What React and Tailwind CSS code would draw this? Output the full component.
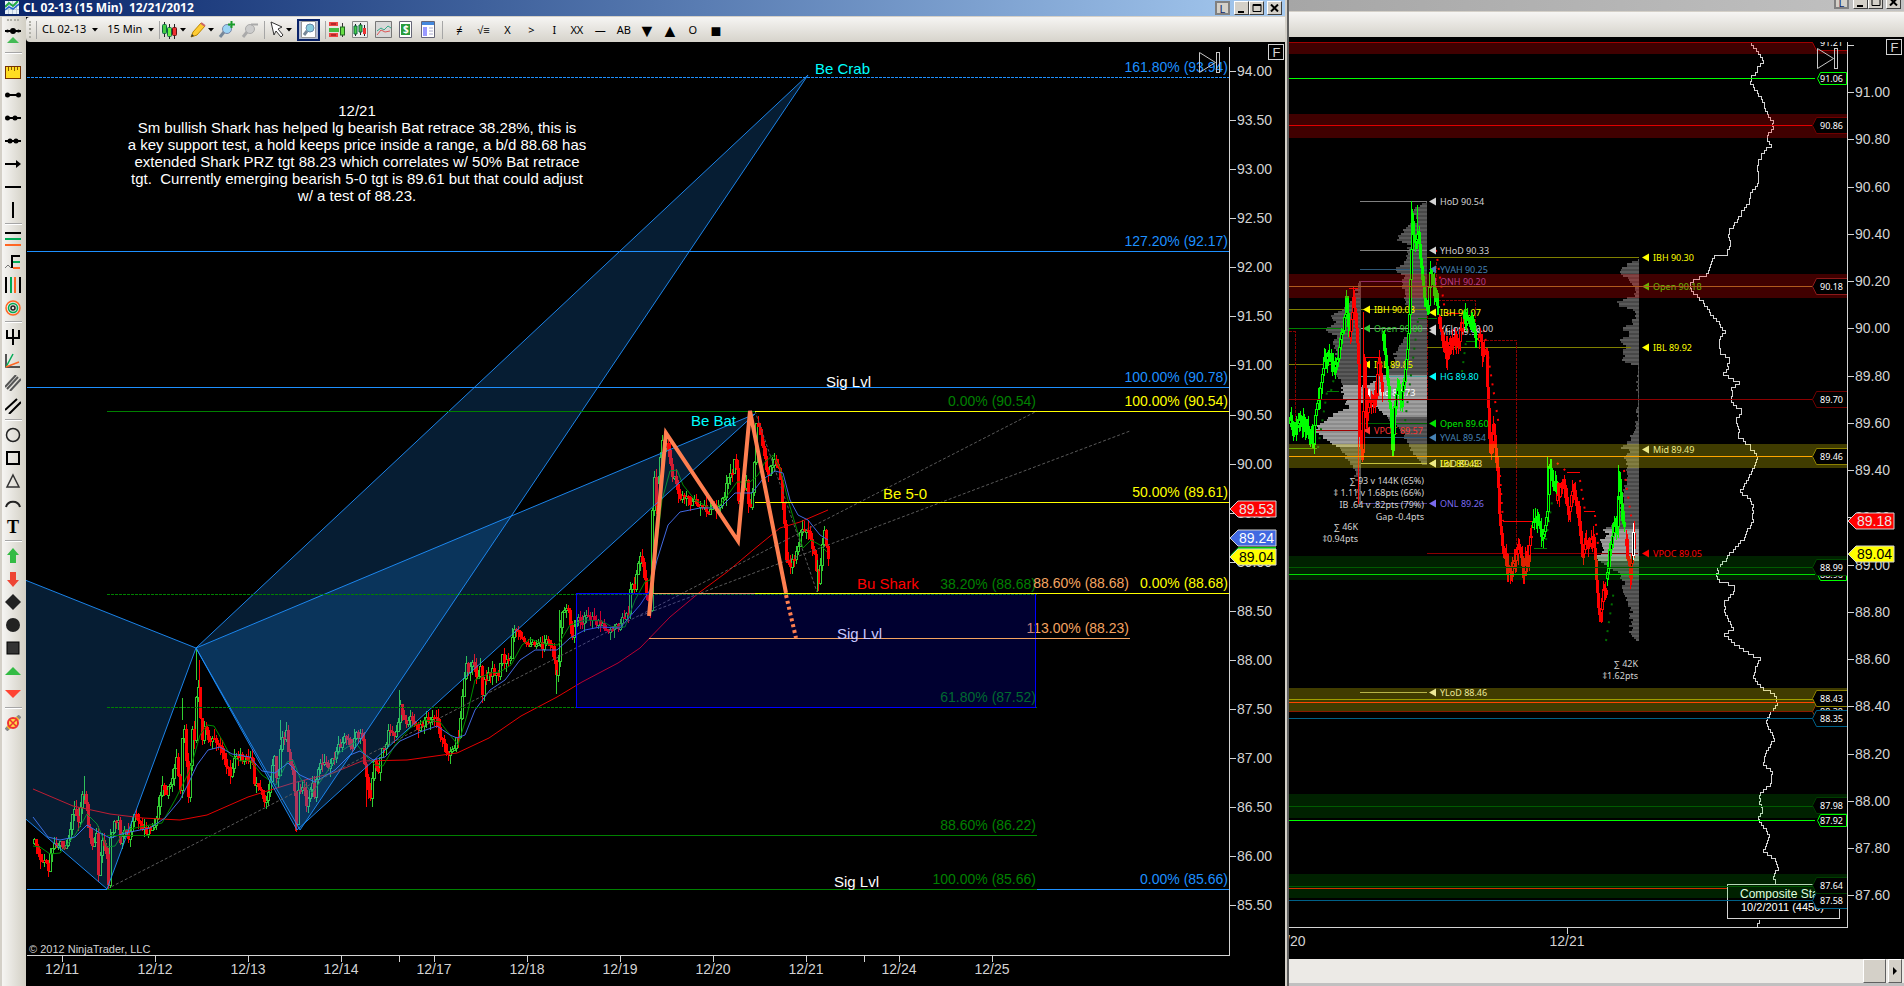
import React from "react";
import clsx from "clsx";

const BLUE = "#1e90ff";
const SILVER = "#d3d3d3";

// Small seeded generator so the bars look the same on every render
const makeRandom = (seed) => {
  let s = seed;
  return () => {
    s = (s * 16807) % 2147483647;
    return s / 2147483647;
  };
};

// Linear interpolation over a list of [x, value] pairs
const valueAt = (points, x) => {
  for (let i = 1; i < points.length; i++) {
    const [x1, y1] = points[i];
    if (x <= x1) {
      const [x0, y0] = points[i - 1];
      return y0 + ((y1 - y0) * (x - x0)) / (x1 - x0 || 1);
    }
  }
  return points[points.length - 1][1];
};

const toLine = (points) => points.map((p) => p.join(",")).join(" ");

const buildCandles = (points, seed, step, noise) => {
  const random = makeRandom(seed);
  const out = { upWick: "", upBody: "", downWick: "", downBody: "" };
  const last = points[points.length - 1][0];
  let open = points[0][1];
  for (let x = points[0][0]; x <= last; x += step) {
    const close = Math.round(valueAt(points, x) + (random() - 0.5) * noise);
    const top = Math.min(open, close);
    const bottom = Math.max(open, close, top + 2);
    const high = Math.round(top - random() * noise);
    const low = Math.round(bottom + random() * noise);
    if (close < open) {
      out.upWick += `M${x + 1} ${high}V${top}M${x + 1} ${bottom}V${low}`;
      out.upBody += `M${x} ${top}h2V${bottom}h-2Z`;
    } else {
      out.downWick += `M${x + 1} ${high}V${low}`;
      out.downBody += `M${x} ${top}h3V${bottom}h-3Z`;
    }
    open = close;
  }
  return out;
};

/* ---------- left chart data ---------- */

const pricePoints = [
  [33, 843], [38, 855], [43, 857], [47, 868], [50, 850], [57, 843], [63, 847], [68, 832], [73, 808], [77, 822],
  [80, 797], [84, 790], [87, 827], [91, 843], [95, 833], [97, 873], [100, 840], [105, 857], [107, 884], [109, 840],
  [112, 830], [116, 813], [119, 843], [123, 827], [127, 838], [133, 812], [138, 820], [145, 830], [150, 830],
  [156, 813], [161, 787], [166, 793], [171, 777], [175, 760], [179, 790], [182, 710], [187, 797], [191, 730],
  [194, 740], [196, 660], [198, 707], [201, 740], [204, 723], [207, 737], [214, 740], [220, 745], [224, 768],
  [229, 772], [234, 753], [241, 760], [250, 757], [253, 780], [259, 790], [264, 802], [268, 783], [273, 753],
  [276, 790], [280, 730], [283, 740], [285, 727], [288, 763], [292, 777], [295, 824], [297, 793], [302, 783],
  [305, 803], [310, 780], [313, 793], [319, 763], [325, 767], [332, 757], [339, 745], [344, 730], [349, 750],
  [352, 740], [356, 733], [361, 737], [364, 773], [369, 800], [373, 760], [378, 773], [380, 747], [384, 752],
  [387, 733], [395, 732], [399, 705], [404, 720], [411, 720], [418, 727], [425, 720], [433, 717], [437, 727],
  [441, 743], [447, 757], [452, 747], [457, 737], [461, 700], [464, 663], [468, 670], [472, 657], [476, 680],
  [479, 663], [481, 697], [484, 677], [491, 670], [496, 677], [501, 657], [508, 663], [511, 637], [515, 630],
  [521, 637], [529, 643], [536, 648], [543, 643], [551, 643], [553, 660], [556, 683], [559, 630], [561, 610],
  [568, 613], [571, 637], [575, 617], [580, 623], [585, 617], [595, 622], [604, 628], [612, 630], [620, 623],
  [627, 610], [630, 583], [634, 585], [637, 560], [640, 555], [644, 587], [649, 613], [651, 513], [653, 473],
  [655, 507], [657, 480], [660, 443], [663, 447], [666, 435], [668, 463], [672, 477], [677, 493], [683, 497],
  [692, 503], [700, 503], [705, 513], [712, 508], [718, 507], [722, 500], [726, 477], [730, 477], [734, 450],
  [738, 513], [740, 490], [745, 480], [748, 513], [752, 480], [755, 420], [760, 443], [766, 473], [773, 460],
  [778, 470], [782, 510], [785, 557], [788, 567], [792, 557], [797, 547], [800, 527], [805, 533], [810, 540],
  [813, 557], [817, 580], [821, 547], [823, 527], [826, 560], [828, 555],
];

const slowAverage = [
  [33, 789], [73, 806], [110, 814], [143, 818], [180, 820], [207, 815], [248, 797], [293, 783], [333, 773],
  [362, 761], [407, 760], [457, 753], [489, 738], [521, 716], [557, 697], [582, 682], [618, 663], [640, 648],
  [670, 617], [700, 592], [727, 572], [753, 550], [780, 528], [800, 522], [828, 510],
];

const fastAverage = [
  [33, 846], [40, 847], [50, 854], [60, 853], [75, 835], [87, 814], [97, 824], [107, 847], [115, 846], [125, 830],
  [150, 825], [162, 823], [175, 800], [190, 770], [200, 735], [207, 725], [214, 726], [222, 740], [230, 755],
  [240, 761], [250, 760], [262, 775], [276, 785], [287, 762], [293, 760], [300, 778], [312, 793], [325, 775],
  [340, 752], [355, 742], [365, 755], [375, 765], [383, 766], [395, 745], [410, 728], [425, 720], [440, 722],
  [450, 735], [458, 745], [467, 715], [475, 680], [490, 673], [500, 672], [511, 665], [522, 645], [530, 639],
  [545, 644], [558, 645], [570, 625], [585, 620], [602, 621], [612, 627], [625, 627], [635, 600], [645, 582],
  [650, 580], [655, 560], [662, 500], [670, 471], [677, 470], [683, 485], [695, 500], [710, 508], [720, 505],
  [730, 492], [737, 482], [750, 482], [758, 475], [765, 462], [773, 455], [780, 468], [788, 500], [797, 530],
  [803, 548], [811, 540], [820, 545], [827, 552],
];

const midAverage = [
  [33, 817], [48, 837], [60, 840], [75, 837], [87, 825], [100, 833], [110, 838], [125, 833], [150, 828],
  [165, 818], [180, 800], [190, 780], [197, 765], [208, 750], [220, 747], [232, 754], [250, 757], [262, 771],
  [275, 773], [288, 763], [300, 775], [315, 782], [335, 770], [350, 755], [360, 751], [373, 760], [385, 757],
  [400, 741], [420, 732], [437, 726], [450, 735], [457, 738], [465, 735], [475, 710], [490, 690], [505, 680],
  [520, 660], [535, 650], [557, 650], [570, 638], [585, 630], [600, 627], [620, 628], [640, 605], [650, 590],
  [657, 560], [668, 525], [680, 512], [700, 508], [720, 508], [735, 493], [752, 493], [762, 480], [775, 471],
  [783, 473], [790, 500], [798, 515], [808, 520], [820, 535], [828, 540],
];

const leftPrices = [
  "94.00", "93.50", "93.00", "92.50", "92.00", "91.50", "91.00", "90.50", "90.00",
  "89.50", "89.00", "88.50", "88.00", "87.50", "87.00", "86.50", "86.00", "85.50",
];
const leftDates = ["12/11", "12/12", "12/13", "12/14", "12/17", "12/18", "12/19", "12/20", "12/21", "12/24", "12/25"];

// from / to in chart x, y of the line, label sits above its right end
const levels = [
  { y: 77, from: 27, to: 1229, color: BLUE, dash: "3 1", label: "161.80% (93.94)" },
  { y: 251, from: 27, to: 1229, color: BLUE, label: "127.20% (92.17)" },
  { y: 387, from: 27, to: 1229, color: BLUE, label: "100.00% (90.78)" },
  { y: 889, from: 27, to: 1229, color: BLUE, label: "0.00% (85.66)" },
  { y: 411, from: 107, to: 1037, color: "#008000", label: "0.00% (90.54)" },
  { y: 594, from: 107, to: 1037, color: "#008000", dash: "3 1", label: "38.20% (88.68)" },
  { y: 707, from: 107, to: 1037, color: "#008000", dash: "3 1", label: "61.80% (87.52)" },
  { y: 835, from: 107, to: 1037, color: "#008000", label: "88.60% (86.22)" },
  { y: 889, from: 107, to: 1037, color: "#008000", label: "100.00% (85.66)" },
  { y: 593, from: 649, to: 1130, color: "#f4a460", label: "88.60% (88.68)" },
  { y: 638, from: 649, to: 1130, color: "#f4a460", label: "113.00% (88.23)" },
  { y: 411, from: 755, to: 1229, color: "#ffff00", label: "100.00% (90.54)" },
  { y: 502, from: 755, to: 1229, color: "#ffff00", label: "50.00% (89.61)" },
  { y: 593, from: 755, to: 1229, color: "#ffff00", label: "0.00% (88.68)" },
];

const chartNotes = [
  { x: 815, y: 74, text: "Be Crab", color: "#00ffff" },
  { x: 826, y: 387, text: "Sig Lvl", color: "#ffffff" },
  { x: 691, y: 426, text: "Be Bat", color: "#00ffff" },
  { x: 883, y: 499, text: "Be 5-0", color: "#ffff00" },
  { x: 857, y: 589, text: "Bu Shark", color: "#ff0000" },
  { x: 837, y: 639, text: "Sig Lvl", color: "#c8c8ff" },
  { x: 834, y: 887, text: "Sig Lvl", color: "#ffffff" },
];

const commentary = [
  "12/21",
  "Sm bullish Shark has helped lg bearish Bat retrace 38.28%, this is",
  "a key support test, a hold keeps price inside a range, a b/d 88.68 has",
  "extended Shark PRZ tgt 88.23 which correlates w/ 50% Bat retrace",
  "tgt.  Currently emerging bearish 5-0 tgt is 89.61 but that could adjust",
  "w/ a test of 88.23.",
];

/* ---------- right chart data ---------- */

const rightSegments = [
  { up: true, points: [[1289, 423], [1292, 433], [1300, 420], [1307, 430], [1312, 440], [1315, 410], [1319, 387], [1322, 367], [1327, 353], [1333, 370], [1338, 350], [1343, 320], [1345, 297], [1348, 337]] },
  { up: false, points: [[1349, 337], [1352, 293], [1355, 323], [1357, 367], [1358, 427], [1361, 453], [1363, 367], [1365, 413], [1370, 400], [1375, 393], [1377, 360], [1381, 393]] },
  { up: true, points: [[1382, 340], [1386, 377], [1389, 413], [1391, 452], [1393, 410], [1397, 387], [1400, 400], [1404, 367], [1408, 320], [1410, 247], [1411, 225], [1414, 243], [1417, 235], [1420, 267], [1423, 300], [1427, 303], [1429, 267], [1433, 290], [1437, 307]] },
  { up: false, points: [[1438, 323], [1445, 353], [1450, 343], [1457, 340], [1462, 320]] },
  { up: true, points: [[1463, 318], [1470, 322], [1475, 337]] },
  { up: false, points: [[1478, 340], [1482, 353], [1485, 350], [1487, 413], [1489, 457], [1492, 427], [1496, 467], [1498, 513], [1501, 547], [1506, 567], [1511, 571], [1517, 546], [1522, 570], [1527, 555], [1530, 532]] },
  { up: true, points: [[1532, 527], [1534, 520], [1542, 537], [1546, 513], [1548, 467], [1551, 480], [1555, 487]] },
  { up: false, points: [[1556, 500], [1561, 480], [1567, 510], [1572, 488], [1577, 510], [1581, 553], [1587, 540], [1593, 543], [1596, 593], [1599, 626], [1602, 593], [1605, 585]] },
  { up: true, points: [[1606, 578], [1608, 553], [1612, 530], [1616, 520], [1618, 480], [1621, 517], [1623, 533]] },
  { up: false, points: [[1625, 545], [1629, 578], [1631, 556], [1633, 532]] },
];

const profiles = [
  {
    edge: 1360, from: 281, to: 505, heavy: [385, 445],
    widths: [[281, 2], [297, 5], [308, 17], [315, 28], [322, 25], [330, 35], [335, 25], [347, 25], [362, 22], [373, 25], [380, 20], [393, 17], [407, 12], [413, 25], [420, 35], [427, 43], [432, 45], [437, 35], [443, 27], [447, 20], [457, 13], [463, 8], [470, 4], [505, 2]],
  },
  {
    edge: 1427, from: 201, to: 465, heavy: [375, 415],
    widths: [[201, 3], [210, 15], [220, 10], [228, 23], [238, 30], [245, 18], [255, 20], [263, 22], [269, 33], [275, 23], [280, 27], [290, 22], [302, 22], [313, 15], [323, 18], [330, 17], [347, 30], [353, 32], [363, 32], [373, 43], [380, 50], [388, 72], [398, 75], [407, 50], [413, 43], [422, 33], [427, 27], [433, 23], [443, 20], [453, 13], [463, 5]],
  },
  {
    edge: 1639, from: 259, to: 641, heavy: [528, 560],
    widths: [[259, 2], [263, 11], [270, 19], [278, 11], [287, 4], [295, 4], [300, 21], [305, 19], [310, 4], [315, 3], [323, 8], [328, 16], [333, 8], [340, 21], [345, 13], [352, 18], [357, 14], [362, 16], [364, 1], [400, 1], [430, 3], [438, 9], [447, 16], [450, 9], [458, 14], [467, 11], [483, 14], [500, 16], [520, 23], [530, 36], [533, 31], [540, 39], [550, 36], [557, 43], [562, 34], [570, 23], [580, 16], [600, 13], [608, 8], [633, 8], [641, 1]],
  },
];

const compositePoints = [
  [42, 1752], [55, 1761], [60, 1763], [66, 1758], [78, 1750], [86, 1753], [98, 1762], [112, 1767], [120, 1772],
  [125, 1773], [135, 1767], [144, 1770], [152, 1762], [163, 1757], [178, 1759], [184, 1757], [192, 1749],
  [200, 1750], [213, 1740], [225, 1733], [232, 1727], [239, 1731], [252, 1727], [255, 1713], [272, 1708],
  [280, 1690], [286, 1689], [300, 1702], [320, 1717], [331, 1725], [338, 1718], [353, 1720], [355, 1729],
  [367, 1728], [372, 1723], [381, 1739], [388, 1731], [403, 1732], [408, 1742], [418, 1736], [435, 1739],
  [445, 1750], [456, 1758], [468, 1753], [490, 1740], [500, 1752], [517, 1753], [537, 1743], [553, 1729],
  [568, 1717], [578, 1717], [586, 1737], [600, 1725], [610, 1724], [627, 1733], [633, 1724], [645, 1738],
  [652, 1750], [657, 1759], [672, 1753], [683, 1757], [692, 1773], [702, 1777], [708, 1773], [720, 1766],
  [737, 1774], [752, 1764], [763, 1763], [770, 1773], [783, 1769], [793, 1760], [802, 1759], [810, 1763],
  [818, 1757], [833, 1769], [850, 1764], [858, 1776], [868, 1777], [877, 1773], [883, 1777], [919, 1759], [927, 1757],
];

const bands = [
  { y: 42, h: 12, color: "#ff0000", opacity: 0.25 },
  { y: 114, h: 24, color: "#ff0000", opacity: 0.25 },
  { y: 274, h: 24, color: "#ff0000", opacity: 0.25 },
  { y: 444, h: 24, color: "#fff000", opacity: 0.25 },
  { y: 556, h: 24, color: "#00ff00", opacity: 0.13 },
  { y: 688, h: 24, color: "#fff000", opacity: 0.25 },
  { y: 794, h: 24, color: "#00ff00", opacity: 0.13 },
  { y: 874, h: 24, color: "#00ff00", opacity: 0.13 },
];

const bandLines = [
  { y: 42, color: "#a00000" },
  { y: 78, color: "#00ff00" },
  { y: 125, color: "#e00000" },
  { y: 286, color: "#b05a1e" },
  { y: 399, color: "#8b0000" },
  { y: 456, color: "#ffa500" },
  { y: 567, color: "#005a00" },
  { y: 574, color: "#00dd00" },
  { y: 699, color: "#a0a000" },
  { y: 702, color: "#ff4500" },
  { y: 711, color: "#8b1a00" },
  { y: 718, color: "#006088" },
  { y: 806, color: "#005a00" },
  { y: 820, color: "#00ff00" },
  { y: 886, color: "#005a00" },
  { y: 888, color: "#d03000", to: 1727 },
  { y: 900, color: "#006088" },
];

const levelTags = [
  { y: 42, text: "91.21", color: "#a00000" },
  { y: 78, text: "91.06", color: "#00ff00", small: true },
  { y: 125, text: "90.86", color: "#6e0000" },
  { y: 286, text: "90.18", color: "#8b1a1a" },
  { y: 399, text: "89.70", color: "#6e0000" },
  { y: 456, text: "89.46", color: "#8b8000" },
  { y: 574, text: "88.96", color: "#00ff00", small: true },
  { y: 567, text: "88.99", color: "#004600" },
  { y: 711, text: "88.38", color: "#8b3a00" },
  { y: 718, text: "88.35", color: "#006088" },
  { y: 698, text: "88.43", color: "#8b8000" },
  { y: 805, text: "87.98", color: "#003c00" },
  { y: 820, text: "87.92", color: "#00ff00", small: true },
  { y: 900, text: "87.58", color: "#006088" },
  { y: 885, text: "87.64", color: "#003c00" },
];

const pointers = [
  { x: 1429, y: 201, text: "HoD 90.54", color: SILVER },
  { x: 1429, y: 250, text: "YHoD 90.33", color: SILVER },
  { x: 1429, y: 269, text: "YVAH 90.25", color: "#4682b4" },
  { x: 1429, y: 281, text: "ONH 90.20", color: "#a050b4" },
  { x: 1429, y: 312, text: "IBH 90.07", color: "#ffff00" },
  { x: 1429, y: 328, text: "YClose 90.00", color: SILVER },
  { x: 1429, y: 331, text: "Mid 89.99", color: SILVER },
  { x: 1429, y: 376, text: "HG 89.80", color: "#00ffff" },
  { x: 1429, y: 423, text: "Open 89.60", color: "#00e600" },
  { x: 1429, y: 437, text: "YVAL 89.54", color: "#4682b4" },
  { x: 1429, y: 463, text: "IBL 89.43", color: "#ffff00" },
  { x: 1429, y: 463, text: "LoD 89.43", color: "#e6e6b4" },
  { x: 1429, y: 503, text: "ONL 89.26", color: "#7a6aee" },
  { x: 1429, y: 692, text: "YLoD 88.46", color: "#e6e6c8" },
  { x: 1363, y: 309, text: "IBH 90.08", color: "#ffff00" },
  { x: 1363, y: 328, text: "Open 90.00", color: "#32cd32" },
  { x: 1363, y: 364, text: "IBL 89.85", color: "#ffff00" },
  { x: 1363, y: 392, text: "Mid 89.73", color: "#ffffff" },
  { x: 1363, y: 430, text: "VPOC 89.57", color: "#ff3232" },
  { x: 1642, y: 257, text: "IBH 90.30", color: "#ffff00" },
  { x: 1642, y: 286, text: "Open 90.18", color: "#3cf000" },
  { x: 1642, y: 347, text: "IBL 89.92", color: "#ffff00" },
  { x: 1642, y: 449, text: "Mid 89.49", color: "#e6e6b4" },
  { x: 1642, y: 553, text: "VPOC 89.05", color: "#ff0000" },
];

const sessionLines = [
  [1360, 1427, 201, "#808080"], [1360, 1427, 250, "#808080"], [1360, 1427, 269, "#2f5878"],
  [1360, 1427, 281, "#6e3c82"], [1360, 1427, 309, "#808000"], [1360, 1427, 328, "#a0a0a0"],
  [1360, 1427, 376, "#50a0a0"], [1360, 1427, 423, "#006400"], [1360, 1427, 437, "#2f5878"],
  [1360, 1427, 463, "#b4b450"], [1360, 1427, 503, "#463c8c"], [1360, 1427, 692, "#a0a060"],
  [1289, 1344, 309, "#808000"], [1289, 1342, 328, "#008000"], [1289, 1336, 364, "#808000"],
  [1289, 1317, 448, "#3c9600"], [1314, 1362, 430, "#a00000"], [1352, 1427, 399, "#b40000"],
  [1427, 1639, 257, "#808000"], [1427, 1631, 347, "#808000"], [1427, 1638, 553, "#8b0000"],
  [1349, 1358, 288, "#ff0000"], [1363, 1381, 357, "#ff0000"], [1446, 1463, 313, "#ff0000"],
  [1503, 1532, 521, "#ff0000"], [1567, 1580, 472, "#ff0000"], [1584, 1595, 511, "#ff0000"],
  [1327, 1339, 391, "#008000"], [1418, 1437, 318, "#008000"], [1466, 1475, 341, "#008000"],
  [1534, 1547, 548, "#008000"],
];

const stopDots = [
  [[1436, 250], [1445, 311]], [[1484, 330], [1499, 426]], [[1557, 463], [1567, 472]],
  [[1580, 480], [1585, 511]], [[1595, 515], [1598, 545]], [[1624, 470], [1632, 522]],
  [[1500, 475], [1503, 521]],
];
const trailDots = [
  [[1318, 448], [1327, 392]], [[1331, 391], [1342, 345]], [[1404, 430], [1418, 320]],
  [[1462, 372], [1466, 342]], [[1546, 540], [1552, 502]], [[1606, 641], [1614, 590]],
];

const sessionStats = [
  [1424, 484, "∑ 93 v 144K (65%)"],
  [1424, 496, "‡ 1.11 v 1.68pts (66%)"],
  [1424, 508, "IB .64 v .82pts (79%)"],
  [1424, 520, "Gap -0.4pts"],
  [1358, 530, "∑ 46K"],
  [1358, 542, "‡0.94pts"],
  [1638, 667, "∑ 42K"],
  [1638, 679, "‡1.62pts"],
];

const rightPrices = [
  "91.00", "90.80", "90.60", "90.40", "90.20", "90.00", "89.80", "89.60", "89.40",
  "89.20", "89.00", "88.80", "88.60", "88.40", "88.20", "88.00", "87.80", "87.60",
];

/* ---------- shared chart pieces ---------- */

const PriceTag = ({ x, y, fill, color, text }) => (
  <g>
    <path d={`M${x} ${y}l8 -8h38v16h-38z`} fill={fill} stroke={SILVER} />
    <text x={x + 9} y={y + 5} fill={color}>{text}</text>
  </g>
);

const SkipToEnd = ({ x, y }) => (
  <g fill="none" stroke="#c8c8c8">
    <path d={`M${x} ${y}v20l16 -10z`} />
    <rect x={x + 17} y={y} width="3" height="20" />
  </g>
);

const FixedBadge = ({ x, y }) => (
  <g>
    <rect x={x} y={y} width="15" height="15" fill="#000" stroke={SILVER} />
    <text x={x + 4} y={y + 12} fill={SILVER} className="text-[13px]">F</text>
  </g>
);

const leftCandles = buildCandles(pricePoints, 77, 2, 9);

const CandleChart = () => (
  <svg
    viewBox="26 42 1259 944"
    className="block h-auto w-full bg-black font-['Liberation_Sans',Arial,sans-serif] text-[14px]"
    role="img"
    aria-label="CL 02-13 15 minute chart"
  >
    <g shapeRendering="crispEdges" fill="none">
      <path d={leftCandles.upWick} stroke="#32cd32" />
      <path d={leftCandles.downWick} stroke="#ff0000" />
      <path d={leftCandles.upBody} stroke="#32cd32" fill="#000" />
      <path d={leftCandles.downBody} fill="#ff0000" />
      <path d="M84 776V800M399 690V710M196 648V680M182 698V720M280 720V740M559 610V640M817 560V592M556 670V694" stroke="#32cd32" />
      <path d="M199 660V700M295 800V831M264 790V807M366 770V807" stroke="#ff0000" />
    </g>

    {/* moving averages */}
    <g fill="none">
      <polyline points={toLine(slowAverage)} stroke="#e60000" />
      <polyline points={toLine(fastAverage)} stroke="#008c00" />
      <polyline points={toLine(midAverage)} stroke="#4169e1" />
    </g>

    {/* harmonic patterns */}
    <g fill={BLUE} fillOpacity="0.2" stroke={BLUE} strokeOpacity="0.9">
      <polygon points="20,578 196,648 107,889 20,814" />
      <polygon points="196,648 808,75 300,830" />
      <polygon points="196,648 755,414 297,830" />
    </g>
    <g stroke="#5a5a5a" strokeDasharray="3 2">
      <path d="M107 889L1037 411M640 616L1130 431M755 411L817 592" fill="none" />
    </g>

    <g shapeRendering="crispEdges">
      {levels.map((l) => (
        <path
          key={l.label}
          d={`M${l.from} ${l.y + 0.5}H${l.to}`}
          stroke={l.color}
          strokeDasharray={l.dash}
        />
      ))}
    </g>
    <g textAnchor="end">
      {levels.map((l) => (
        <text key={l.label} x={l.to - 1} y={l.y - 5} fill={l.color}>{l.label}</text>
      ))}
    </g>

    <rect x="576.5" y="593.5" width="459" height="114" fill="#0000ff" fillOpacity="0.19" stroke="#0000ff" />
    <path d="M649 593.5H755" stroke="#f4a460" />
    <path d="M755 593.5H1229" stroke="#ffff00" />
    <path d="M649 638.5H1130" stroke="#f4a460" />

    <g fill="none" stroke="#ff7f50" strokeWidth="4">
      <path d="M649 616L666 433L738 541L750 411L786 593" />
      <path d="M786 595L796 638" strokeDasharray="3 3" />
    </g>

    <g className="text-[15px]">
      {chartNotes.map((n) => (
        <text key={n.text + n.y} x={n.x} y={n.y} fill={n.color}>{n.text}</text>
      ))}
      {commentary.map((line, i) => (
        <text key={line} x="357" y={116 + i * 17} fill="#ffffff" textAnchor="middle" xmlSpace="preserve">
          {line}
        </text>
      ))}
    </g>

    {/* price scale */}
    <g fill={SILVER} stroke="none">
      <path d="M1229.5 47V955M27 955.5H1230M399.500 956v6M864.500 956v6" stroke={SILVER} shapeRendering="crispEdges" />
      {leftPrices.map((p) => {
        const y = Math.round(71 + (94 - Number(p)) * 98.15);
        return (
          <g key={p}>
            <path d={`M1230 ${y + 0.5}h6`} stroke={SILVER} />
            <text x="1237" y={y + 5}>{p}</text>
          </g>
        );
      })}
      {leftDates.map((d, i) => (
        <g key={d}>
          <path d={`M${62.5 + i * 93} 956v6`} stroke={SILVER} />
          <text x={62 + i * 93} y="974" textAnchor="middle">{d}</text>
        </g>
      ))}
      <text x="29" y="953" className="text-[11px]">© 2012 NinjaTrader, LLC</text>
    </g>

    <PriceTag x={1230} y={509} fill="#ff0000" color="#e6e6e6" text="89.53" />
    <PriceTag x={1230} y={538} fill="#4169e1" color="#ffffff" text="89.24" />
    <path d="M1231 556l8 -8h37" fill="none" stroke="#00c800" strokeWidth="2" />
    <PriceTag x={1230} y={557} fill="#ffff00" color="#000000" text="89.04" />
    <SkipToEnd x={1199.5} y={52.5} />
    <FixedBadge x={1268.5} y={44.5} />
  </svg>
);

const VolumeProfile = ({ profile, seed }) => {
  const random = makeRandom(seed);
  const rows = [];
  for (let y = profile.from; y < profile.to; y += 2) {
    const w = Math.round(valueAt(profile.widths, y) + (random() - 0.5) * 4);
    const isHeavy = y >= profile.heavy[0] && y <= profile.heavy[1];
    const even = rows.length % 2 === 0;
    rows.push(
      <rect
        key={y}
        x={profile.edge - Math.max(w, 1)}
        y={y}
        width={Math.max(w, 1)}
        height="2"
        fill={isHeavy ? (even ? "#a0a0a0" : "#8c8c8c") : even ? "#5a5a5a" : "#484848"}
      />
    );
  }
  return <g shapeRendering="crispEdges">{rows}</g>;
};

const compositePath = () => {
  const random = makeRandom(31);
  let d = "M1752.5 42.5";
  for (let y = 42; y < 884; y += 3) {
    const x = Math.round(valueAt(compositePoints, y) + (random() - 0.5) * 2);
    d += `H${x + 0.5}V${y + 3.5}`;
  }
  return d + "M1759.5 919.5v4h-2v4";
};

const rightCandles = rightSegments.map((s, i) => buildCandles(s.points, 11 + i * 7, 1, 12));

const ProfileChart = () => (
  <svg
    viewBox="1289 37 615 922"
    className="block h-auto w-full bg-black font-['Liberation_Sans',Arial,sans-serif] text-[14px]"
    role="img"
    aria-label="CL volume profile chart"
  >
    <defs>
      <clipPath id="plot">
        <rect x="1289" y="42" width="559" height="886" />
      </clipPath>
    </defs>
    <g clipPath="url(#plot)">
      {profiles.map((p, i) => (
        <VolumeProfile key={p.edge} profile={p} seed={101 + i} />
      ))}
      <g shapeRendering="crispEdges">
        {sessionLines.map(([from, to, y, color]) => (
          <path key={`${from}-${y}`} d={`M${from} ${y + 0.5}H${to}`} stroke={color} />
        ))}
        <path
          d="M1289 331.5H1295V430M1427.5 300V400M1436 262V300.5H1475V340.5H1516V545"
          fill="none"
          stroke="#8b0000"
          strokeDasharray="3 1"
        />
        <path d="M1360.5 281V505" stroke="#505050" />
      </g>
      <g fill="none" strokeDasharray="2 7">
        {stopDots.map((p) => (
          <polyline key={toLine(p)} points={toLine(p)} stroke="#ff0000" strokeWidth="2" />
        ))}
        {trailDots.map((p) => (
          <polyline key={toLine(p)} points={toLine(p)} stroke="#006e00" strokeWidth="2" />
        ))}
      </g>

      <g className="font-['Noto_Sans',sans-serif] text-[9px]">
        {pointers.map((p) => (
          <g key={p.text} fill={p.color}>
            <path d={`M${p.x} ${p.y + 0.5}l7 -4v8z`} />
            <text x={p.x + 11} y={p.y + 4}>{p.text}</text>
          </g>
        ))}
        <g fill={SILVER} textAnchor="end">
          {sessionStats.map(([x, y, text]) => (
            <text key={text} x={x} y={y}>{text}</text>
          ))}
        </g>
      </g>

      <g shapeRendering="crispEdges">
        {rightCandles.map((c, i) => {
          const color = rightSegments[i].up ? "#00ff00" : "#ff0000";
          return (
            <g key={i} fill={color} stroke={color}>
              <path d={c.upWick + c.downWick} />
              <path d={c.upBody} fill="#000" />
              <path d={c.downBody} stroke="none" />
            </g>
          );
        })}
        <path d="M1358.5 430V504M1363.5 312V400" stroke="#ff0000" />
        <path d="M1411.5 201V240M1417.5 205V230M1547.5 456V500M1618.5 465V500" stroke="#00ff00" />
        <path d="M1633.5 523V560" stroke="#ffffff" />
        <rect x="1632.5" y="532.5" width="2" height="23" fill="#000" stroke="#ffffff" />
      </g>

      <path d={compositePath()} fill="none" stroke={SILVER} shapeRendering="crispEdges" />

      <rect x="1727.5" y="884.5" width="112" height="34" fill="#000" stroke={SILVER} />
      <g className="text-[11px]" fill="#ffffff">
        <text x="1740" y="898" className="text-[12px]">Composite Sta</text>
        <text x="1741" y="911">10/2/2011 (4450)</text>
      </g>

      <g shapeRendering="crispEdges">
        {bands.map((b) => (
          <rect key={b.y} x="1289" y={b.y} width="559" height={b.h} fill={b.color} fillOpacity={b.opacity} />
        ))}
        {bandLines.map((l) => (
          <path key={l.y} d={`M1289 ${l.y + 0.5}H${l.to || 1815}`} stroke={l.color} />
        ))}
      </g>

      <g className="font-['Noto_Sans',sans-serif] text-[9px]">
        {levelTags.map((t) => (
          <g key={t.text}>
            <path
              d={
                t.small
                  ? `M1817.5 ${t.y + 0.5}l3 -6h26v12h-26z`
                  : `M1812.5 ${t.y + 0.5}l4 -8h31v16h-31z`
              }
              fill="#000"
              stroke={t.color}
            />
            <text x="1820" y={t.y + 4} fill="#ffffff">{t.text}</text>
          </g>
        ))}
      </g>
    </g>

    <g fill={SILVER}>
      <path d="M1847.5 42V928M1289 927.5H1848M1848 45.5h6M1567.5 928v6" stroke={SILVER} shapeRendering="crispEdges" />
      {rightPrices.map((p) => {
        const y = Math.round(92 + (91 - Number(p)) * 236.3);
        return (
          <g key={p}>
            <path d={`M1848 ${y + 0.5}h6`} stroke={SILVER} />
            <text x="1855" y={y + 5}>{p}</text>
          </g>
        );
      })}
      <text x="1288" y="946" textAnchor="middle">12/20</text>
      <text x="1567" y="946" textAnchor="middle">12/21</text>
    </g>
    <PriceTag x={1848} y={521} fill="#ff0000" color="#e6e6e6" text="89.18" />
    <PriceTag x={1848} y={554} fill="#ffff00" color="#000000" text="89.04" />
    <SkipToEnd x={1817.5} y={48.5} />
    <FixedBadge x={1886.5} y={39.5} />
  </svg>
);

/* ---------- window chrome ---------- */

const captionButton =
  "flex h-[14px] w-[15px] items-center justify-center border border-t-white border-l-white border-r-[#404040] border-b-[#404040] bg-[#d4d0c8]";

const WindowButtons = () => (
  <div className="flex h-[14px] shrink-0 items-center">
    <button className="mr-1 flex h-[14px] w-[15px] items-center justify-center border-2 border-[#808080] bg-[#d4d0c8] text-[11px] leading-none text-[#0a246a]">
      L
    </button>
    <button aria-label="Minimize" className={captionButton}>
      <svg width="9" height="9"><path d="M1 7h6v2h-6z" /></svg>
    </button>
    <button aria-label="Maximize" className={captionButton}>
      <svg width="10" height="10"><path d="M1 1.5h8v7h-8zM1 2.5h8" fill="none" stroke="#000" /></svg>
    </button>
    <button aria-label="Close" className={clsx(captionButton, "ml-[3px]")}>
      <svg width="9" height="8"><path d="M1 0.5L8 7.5M8 0.5L1 7.5" stroke="#000" strokeWidth="2" /></svg>
    </button>
  </div>
);

const Caret = () => (
  <svg width="6" height="4" className="shrink-0"><path d="M0 0h6l-3 3.5z" /></svg>
);

const ToolSeparator = () => <div className="h-[18px] w-px shrink-0 bg-[#a6a6a6]" />;

const CandlesIcon = () => (
  <svg width="15" height="18">
    <path d="M2.5 1V16M7.5 3V18M12.5 3V18" stroke="#222" />
    <rect x="0.5" y="3.5" width="4" height="9" rx="1" fill="#4c4" stroke="#164" />
    <rect x="5.5" y="6.5" width="4" height="9" rx="1" fill="#6e4" stroke="#164" />
    <rect x="10.5" y="6.5" width="4" height="8" rx="1" fill="#e33" stroke="#611" />
  </svg>
);

const PencilIcon = () => (
  <svg width="16" height="16">
    <path d="M1 15l2-5 8-9 4 3-8 9z" fill="#fc3" stroke="#b80" />
    <path d="M1 15l1-3 2 2z" fill="#333" />
    <path d="M11 1l4 3" stroke="#c66" strokeWidth="2" />
  </svg>
);

const LensIcon = ({ sign, muted }) => (
  <svg width="17" height="17">
    <path d="M2 16l4-5" stroke={muted ? "#aaa" : "#789"} strokeWidth="3" />
    <circle cx="9" cy="8" r="4.5" fill={muted ? "#ccc" : "#9cd4f4"} stroke={muted ? "#aaa" : "#78a"} />
    {sign === "+" && <path d="M13.5 0v7M10 3.5h7" stroke="#1a9c2c" strokeWidth="2" />}
    {sign === "-" && <path d="M10 3.5h7" stroke="#aaa" strokeWidth="2" />}
  </svg>
);

const textTools = [
  ["≠", "w-[24px]"], ["√≡", "w-[24px]"], ["X", "w-[24px]"], [">", "w-[24px]"], ["I", "w-[22px]"], ["XX", "w-[23px]"],
  ["—", "w-[24px]"], ["AB", "w-[23px]"], ["▼", "w-[23px]"], ["▲", "w-[23px]"], ["O", "w-[23px]"], ["■", "w-[23px]"],
];

const Toolbar = () => (
  <div className="flex h-[25px] items-center overflow-hidden rounded-l-sm bg-linear-to-b from-[#f6f5f3] to-[#d6d3cb] pl-[3px] text-[11px] text-black">
    <div className="h-[17px] border-l-2 border-dotted border-[#b0b0a8]" />
    <div className="ml-[5px] flex items-center gap-[5px]">
      <ToolSeparator />
      <button className="flex items-center gap-[6px] whitespace-nowrap">CL 02-13 <Caret /></button>
      <button className="ml-[4px] flex items-center gap-[6px] whitespace-nowrap">15 Min <Caret /></button>
      <ToolSeparator />
    </div>
    <div className="ml-[2px] flex items-center gap-[4px]">
      <button aria-label="Chart style" className="flex items-center gap-[3px]"><CandlesIcon /><Caret /></button>
      <button aria-label="Draw" className="flex items-center gap-[2px]"><PencilIcon /><Caret /></button>
      <button aria-label="Zoom in"><LensIcon sign="+" /></button>
      <button aria-label="Zoom out" className="ml-[2px]"><LensIcon sign="-" muted /></button>
    </div>
    <div className="ml-[6px] flex items-center gap-[5px]">
      <ToolSeparator />
      <button aria-label="Cursor" className="flex items-center gap-[2px]">
        <svg width="14" height="17"><path d="M1 1l11 5-4 2 5 6-2 2-5-6-2 4z" fill="#fff" stroke="#333" /></svg>
        <Caret />
      </button>
      <button aria-label="Zoom box" className="flex h-[22px] w-[23px] items-center justify-center border-2 border-[#0a246a] bg-[#b4bdd2]">
        <svg width="15" height="17">
          <path d="M0.500 0.500h14v16h-14z" fill="#fff" stroke="#999" />
          <path d="M3 14l3-4" stroke="#789" strokeWidth="3" />
          <circle cx="9" cy="7" r="4" fill="#8cd" stroke="#68a" />
        </svg>
      </button>
      <ToolSeparator />
    </div>
    <div className="ml-[3px] flex items-center gap-[7px]">
      <button aria-label="Chart trader">
        <svg width="16" height="17">
          <path d="M0 1h9v4h-9zM0 12h9v4h-9z" fill="#e44" />
          <path d="M2 3h5M2 14h5" stroke="#711" />
          <rect x="0" y="7" width="10" height="4" fill="#4b4" />
          <path d="M13.500 2V16" stroke="#333" />
          <rect x="11.500" y="6" width="4" height="8" fill="#6d4" stroke="#262" />
        </svg>
      </button>
      <button aria-label="Data series">
        <svg width="16" height="17">
          <path d="M0.500 0.500h15v16h-15z" fill="#eee" stroke="#888" />
          <path d="M3.500 3V15M8.500 2V14M12.500 4V15" stroke="#222" />
          <path d="M2 5h3v8h-3zM7 4h3v7h-3z" fill="#4c4" stroke="#164" />
          <path d="M11 7h3v6h-3z" fill="#e33" />
        </svg>
      </button>
      <button aria-label="Indicators">
        <svg width="17" height="17">
          <path d="M0.500 0.500h16v16h-16z" fill="#d8d8d8" stroke="#777" />
          <path d="M2 10l4-3 3 2 4-4 3 2" fill="none" stroke="#3a8" />
          <path d="M2 14l4-5 4 2 5-1" fill="none" stroke="#d55" />
        </svg>
      </button>
      <button aria-label="Strategies">
        <svg width="13" height="17">
          <path d="M0.500 0.500h12v16h-12z" fill="#fff" stroke="#667" />
          <rect x="2" y="3" width="9" height="11" fill="#2a9c3c" />
          <text x="4" y="12" fill="#fff" className="text-[10px] font-bold">$</text>
        </svg>
      </button>
      <button aria-label="Properties" className="ml-[2px]">
        <svg width="14" height="17">
          <path d="M0.500 0.500h13v16h-13z" fill="#fff" stroke="#667" />
          <path d="M1 1h12v3h-12z" fill="#48d" />
          <rect x="2" y="6" width="4" height="9" fill="#99f" />
          <path d="M8 7h4M8 10h4M8 13h4" stroke="#aac" />
        </svg>
      </button>
      <ToolSeparator />
    </div>
    <div className="ml-[4px] flex items-center">
      {textTools.map(([label, width]) => (
        <button key={label} className={clsx("shrink-0 text-center leading-none", width, "▼▲■".includes(label) && "text-[18px]")}>
          {label}
        </button>
      ))}
    </div>
  </div>
);

// "sep" marks a divider between groups of drawing tools
const drawingTools = [
  ["Ruler", <g><rect x="0.5" y="2.5" width="15" height="12" fill="#fd2" stroke="#730" /><path d="M3.500 3v4M6.500 3v3M9.500 3v4M12.500 3v3" stroke="#850" /></g>],
  ["Line", <g><path d="M2 8h12" stroke="#000" strokeWidth="2" /><circle cx="2.500" cy="8" r="2.500" /><circle cx="13.500" cy="8" r="2.500" /></g>],
  ["Ray", <g><path d="M2 8h14" stroke="#000" strokeWidth="2" /><circle cx="2.500" cy="8" r="2.500" /><circle cx="10" cy="8" r="2.500" /></g>],
  ["Extended line", <g><path d="M0 8h16" stroke="#000" strokeWidth="2" /><circle cx="5" cy="8" r="2.500" /><circle cx="11" cy="8" r="2.500" /></g>],
  ["Arrow line", <g><path d="M0 8h14" stroke="#000" strokeWidth="2" /><path d="M11 4l5 4-5 4z" /></g>],
  ["Horizontal line", <path d="M0 8h16" stroke="#000" strokeWidth="2" />],
  ["Vertical line", <path d="M8 0v16" stroke="#000" strokeWidth="2" />],
  "sep",
  ["Retracements", <g strokeWidth="2"><path d="M0 2h16" stroke="#000" /><path d="M0 8h16" stroke="#0a5" /><path d="M0 14h16" stroke="#f62" /></g>],
  ["Extensions", <g fill="none" strokeWidth="2"><path d="M15 2H7v12" stroke="#000" /><path d="M8 8h7" stroke="#0a5" /><path d="M8 14h7" stroke="#f62" /><path d="M0 14l3-3 3 3" stroke="#777" strokeWidth="1" /></g>],
  ["Time extensions", <g strokeWidth="2"><path d="M1 0v16M15 0v16" stroke="#000" /><path d="M6 0v16" stroke="#0a5" /><path d="M10 0v16" stroke="#f62" /></g>],
  ["Circles", <g fill="none" strokeWidth="1.500"><circle cx="8" cy="8" r="7" stroke="#f62" /><circle cx="8" cy="8" r="4.500" stroke="#0a5" /><circle cx="8" cy="8" r="2" stroke="#222" /></g>],
  "sep",
  ["Pitchfork", <path d="M2 1v8h12V1M8 0v16" fill="none" stroke="#000" strokeWidth="2" />],
  ["Gann fan", <g fill="none" strokeWidth="1.500"><path d="M1 2v13h14" stroke="#222" /><path d="M1 15L8 2" stroke="#0a5" /><path d="M1 15l13-5" stroke="#f62" /></g>],
  ["Regression channel", <path d="M0 12L11 0M2 14L13 2M5 16L16 4" stroke="#555" strokeWidth="2" />],
  ["Trend channel", <path d="M0 12L12 1M4 16L16 4" stroke="#000" strokeWidth="2" />],
  "sep",
  ["Ellipse", <circle cx="8" cy="8" r="6.500" fill="none" stroke="#222" strokeWidth="1.500" />],
  ["Rectangle", <rect x="2" y="2" width="12" height="12" fill="none" stroke="#000" strokeWidth="2" />],
  ["Triangle", <path d="M8 2l6 12H2z" fill="none" stroke="#333" strokeWidth="1.500" />],
  ["Arc", <path d="M1 11c2-7 12-7 14 0" fill="none" stroke="#222" strokeWidth="2" />],
  ["Text", null],
  "sep",
  ["Arrow up", <path d="M8 0l6 7h-3v8H5V7H2z" fill="#3b4" />],
  ["Arrow down", <path d="M8 16l6-7h-3V1H5v8H2z" fill="#e43" />],
  ["Diamond", <path d="M8 0l8 8-8 8-8-8z" fill="#222" />],
  ["Dot", <circle cx="8" cy="8" r="7" fill="#222" />],
  ["Square", <rect x="2" y="2" width="12" height="12" fill="#333" stroke="#000" />],
  ["Triangle up", <path d="M8 4l8 8H0z" fill="#3b4" />],
  ["Triangle down", <path d="M8 12l8-8H0z" fill="#f43" />],
  "sep",
  ["Remove drawings", <g><path d="M1 15L15 1" stroke="#888" strokeWidth="4" /><path d="M3 13L13 3" stroke="#fb2" strokeWidth="4" /><circle cx="8" cy="8" r="5" fill="#fd4" stroke="#e33" strokeWidth="2" /><path d="M4.500 4.500l7 7M11.500 4.500l-7 7" stroke="#e33" strokeWidth="1.500" /></g>],
];

const DrawingBar = () => (
  <aside className="flex w-[26px] shrink-0 flex-col items-center border-l-2 border-[#d4d0c8] bg-linear-to-r from-[#f6f5f3] to-[#d2cfc4] pr-[2px]">
    <div className="mt-[2px] h-[4px] w-[12px] border-t-2 border-dotted border-[#b0b0a8]" />
    <button aria-label="Snap mode" className="flex h-[23px] w-5 items-center justify-center">
      <svg width="16" height="18">
        <path d="M0 5h16" stroke="#000" strokeWidth="2" />
        <circle cx="8" cy="5" r="3" /><circle cx="2.500" cy="5" r="1.500" /><circle cx="13.500" cy="5" r="1.500" />
        <path d="M8 11l6 6H2z" fill="#4b5" />
      </svg>
    </button>
    <div className="my-[6px] h-[2px] w-[17px] border-t border-[#a6a6a6] bg-white" />
    {drawingTools.map((tool, i) =>
      tool === "sep" ? (
        <div key={i} className="my-[2px] h-[2px] w-[17px] shrink-0 border-t border-[#a6a6a6] bg-white" />
      ) : (
        <button key={i} aria-label={tool[0]} className="flex h-[23px] w-5 shrink-0 items-center justify-center">
          {tool[1] ? (
            <svg width="16" height="16">{tool[1]}</svg>
          ) : (
            <span className="font-['Liberation_Serif',serif] text-[18px] leading-none font-bold">T</span>
          )}
        </button>
      )
    )}
  </aside>
);

export default function App() {
  return (
    <main className="grid min-h-screen grid-cols-[1289fr_615fr] overflow-hidden bg-black font-['Noto_Sans',sans-serif]">
      <section className="flex min-w-0 flex-col border-r-2 border-[#606060]">
        <div className="flex flex-1 flex-col border-r-2 border-[#d4d0c8]">
          <header className="flex h-4 items-center justify-between overflow-hidden bg-linear-to-r from-[#0a246a] to-[#a6caf0] pr-[3px] pl-[5px]">
            <div className="flex items-center gap-[4px]">
              <svg width="14" height="14">
                <rect width="14" height="13" fill="#e8f0f8" />
                <path d="M3.500 0V13M7.500 0V13M11.500 0V13M0 4.500H14M0 8.500H14" stroke="#b8c8d8" />
                <path d="M0 9l4-3 4 2 6-5" fill="none" stroke="#26c" strokeWidth="1.500" />
                <path d="M0 6l4-4 4 3 5-5" fill="none" stroke="#2a4" strokeWidth="2" />
              </svg>
              <h1 className="text-[12px] leading-[14px] font-bold whitespace-pre text-white">CL 02-13 (15 Min)  12/21/2012</h1>
            </div>
            <WindowButtons />
          </header>
          <div className="flex flex-1 border-t border-[#d4d0c8]">
            <DrawingBar />
            <div className="min-w-0 flex-1">
              <Toolbar />
              <CandleChart />
            </div>
          </div>
        </div>
      </section>

      <section className="flex min-w-0 flex-col">
        <header className="flex h-[11px] items-end justify-end overflow-hidden bg-linear-to-r from-[#a6a6a6] to-[#c2c2c2] pr-[3px] pb-[2px]">
          <WindowButtons />
        </header>
        <div className="h-[26px] border-t border-[#d4d0c8] bg-linear-to-b from-[#f6f5f3] to-[#d6d3cb]" />
        <ProfileChart />
        <div className="flex h-6 justify-end gap-[2px] bg-[#eceae6] pr-[2px]">
          <div className="w-[23px] border border-t-white border-l-white border-r-[#606060] border-b-[#606060] bg-[#d4d0c8]" />
          <button aria-label="Scroll right" className="flex w-[14px] items-center justify-center border border-t-white border-l-white border-r-[#606060] border-b-[#606060] bg-[#d4d0c8]">
            <svg width="5" height="8"><path d="M0 0l4 4-4 4z" /></svg>
          </button>
        </div>
        <div className="h-[3px] bg-[#c0c0c0]" />
      </section>
    </main>
  );
}
